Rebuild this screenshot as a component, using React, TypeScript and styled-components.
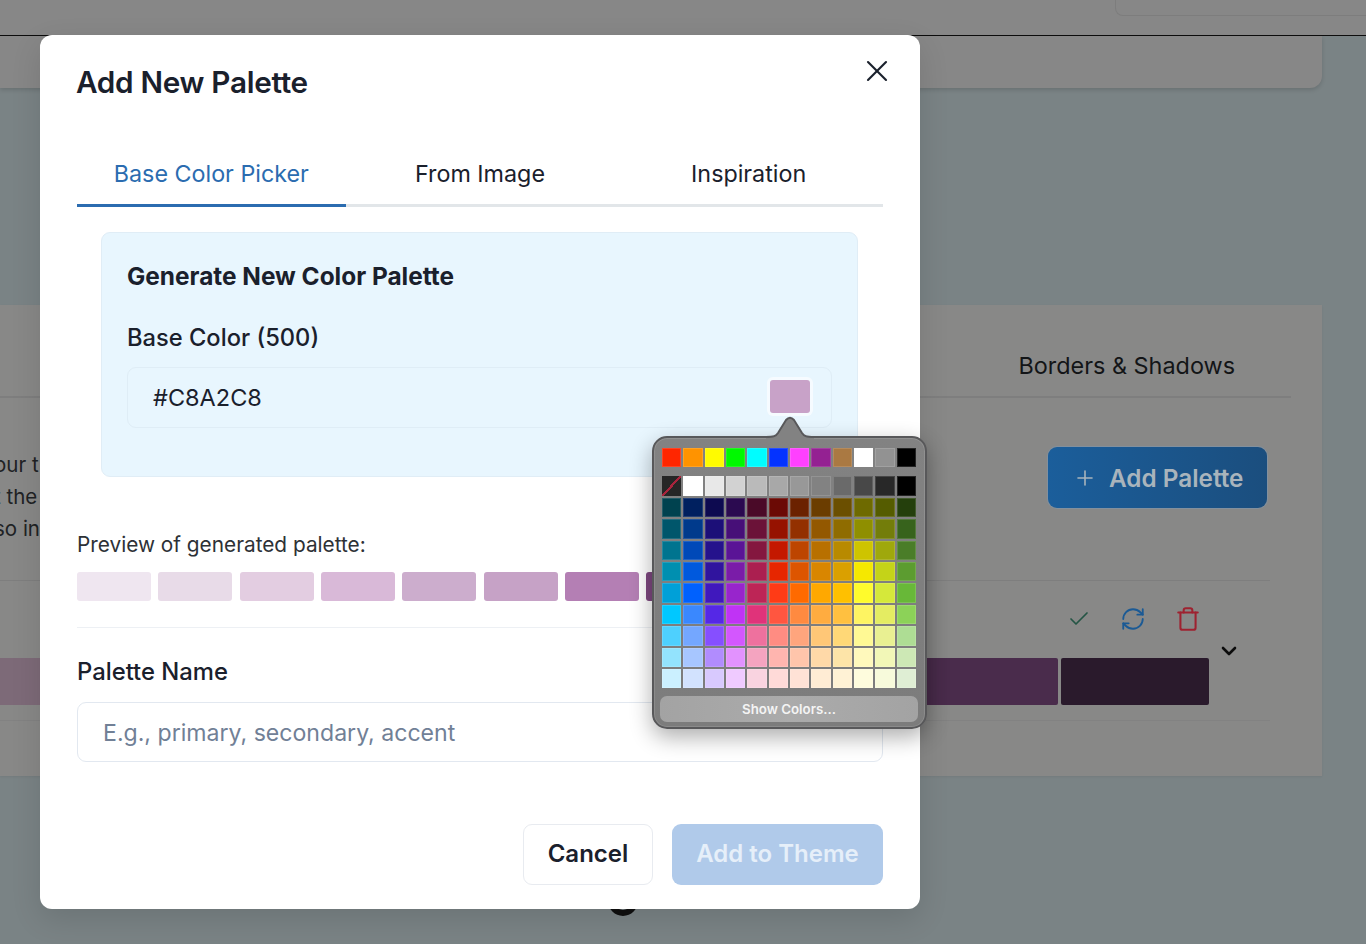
import React from "react";
import styled, { createGlobalStyle } from "styled-components";
import { Check, RefreshCw, Trash, ChevronDown, Plus, X } from "lucide-react";

const Global = createGlobalStyle`
  html, body { margin: 0; padding: 0; background: #7a8385; }
  body { font-family: Inter, "Liberation Sans", sans-serif; }
  * { box-sizing: border-box; }
`;

const Page = styled.div`
  position: relative;
  width: 1366px;
  height: 944px;
  overflow: hidden;
  background: #7a8385;
`;

/* ---------- dimmed page behind the dialog ---------- */
const Header = styled.header`
  display: flex;
  justify-content: flex-end;
  height: 36px;
  background: #878787;
  border-bottom: 1.5px solid #0d0d0d;
`;
const SearchStub = styled.div`
  width: 251px;
  height: 16px;
  border-left: 1px solid #7d7d7d;
  border-bottom: 1px solid #7d7d7d;
  border-bottom-left-radius: 8px;
`;
const TopCard = styled.div`
  width: 1322px;
  height: 52px;
  background: #878787;
  border-bottom-right-radius: 12px;
  box-shadow: 0 2px 4px rgba(0, 0, 0, 0.14);
`;
const MainCard = styled.section`
  width: 1322px;
  height: 471px;
  margin-top: 217px;
  background: #888887;
  box-shadow: 0 1px 2px rgba(0, 0, 0, 0.06);
`;
const PageTabs = styled.div`
  display: flex;
  justify-content: flex-end;
  align-items: flex-end;
  width: 1291px;
  height: 93px;
  padding: 0 56px 14px 0;
  border-bottom: 2px solid #7e7e7e;
  color: #131517;
  font-size: 23.4px;
  line-height: 32px;
`;
const Intro = styled.div`
  display: flex;
  justify-content: space-between;
  width: 1267px;
  height: 182px;
  padding-top: 49px;
`;
const IntroText = styled.p`
  margin: 0 0 0 -6px;
  padding-top: 2px;
  font-size: 20.5px;
  line-height: 32px;
  color: #202224;
  white-space: pre;
`;
const AddPalette = styled.div`
  display: flex;
  align-items: center;
  gap: 12px;
  width: 219px;
  height: 61px;
  padding-left: 25px;
  border-radius: 9px;
  background: linear-gradient(90deg, #1b5e9b, #1b4e7e);
  box-shadow: 0 0 0 1px rgba(120, 160, 200, 0.35);
  color: #a9b4bc;
  font-size: 24.3px;
  font-weight: 600;
`;
const RowRule = styled.div`
  width: 1270px;
  border-top: 1px solid #7e7e7e;
`;
const Actions = styled.div`
  display: flex;
  justify-content: flex-end;
  align-items: center;
  gap: 29px;
  width: 1201px;
  height: 76px;
  margin-bottom: 1px;
`;
const SwatchRow = styled.div`
  display: flex;
  align-items: flex-start;
  width: 1240px;
  height: 62px;
`;
const DarkSwatches = styled.div`
  display: flex;
  flex: none;
  gap: 3px;
  width: 1209px;
`;
const DarkSwatch = styled.div.attrs<{ $c: string }>((p) => ({ style: { background: p.$c } }))<{ $c: string }>`
  flex: 0 0 148px;
  height: 47px;
  border-radius: 2px;
  &:first-child {
    flex: 1 1 0;
    border-radius: 0;
  }
`;
const Chevron = styled.div`
  display: flex;
  margin: -19px 0 0 8px;
  color: #0c0c0c;
`;
const FadedRule = styled.div`
  width: 1270px;
  border-top: 1px solid #828282;
`;
const Spinner = styled.div`
  position: absolute;
  left: 608px;
  top: 886px;
  width: 30px;
  height: 30px;
  border-radius: 50%;
  border: 6px solid #101010;
`;

/* ---------- dialog ---------- */
const Overlay = styled.div`
  position: absolute;
  inset: 0;
  padding: 35px 0 0 40px;
`;
const Dialog = styled.div`
  position: relative;
  display: flex;
  flex-direction: column;
  width: 880px;
  height: 874px;
  padding: 28px 37px 0;
  background: #fff;
  border-radius: 12px;
  box-shadow: 0 10px 30px rgba(0, 0, 0, 0.12);
  color: #1a202c;
`;
const Title = styled.h2`
  margin: 0 0 0 -1px;
  height: 38px;
  font-size: 29.7px;
  line-height: 38px;
  font-weight: 600;
  letter-spacing: -0.3px;
`;
const Close = styled.div`
  position: absolute;
  top: 18px;
  right: 25px;
  display: flex;
  color: #1a202c;
`;
const Tabs = styled.div`
  display: grid;
  grid-template-columns: repeat(3, 1fr);
  width: 806px;
  margin-top: 43px;
  border-bottom: 3px solid #e2e6e9;
`;
const Tab = styled.div<{ $active?: boolean }>`
  height: 63px;
  margin-bottom: -3px;
  padding-top: 14px;
  text-align: center;
  font-size: 23.3px;
  line-height: 32px;
  color: ${(p) => (p.$active ? "#2b6cb0" : "#1a202c")};
  border-bottom: 3px solid ${(p) => (p.$active ? "#2b6cb0" : "transparent")};
`;
const GeneratorBox = styled.div`
  width: 757px;
  height: 245px;
  margin: 25px 0 0 24px;
  padding: 26px 25px 0;
  background: #e8f6fe;
  border: 1px solid #e0edf6;
  border-radius: 9px;
`;
const BoxTitle = styled.h3`
  margin: 0;
  font-size: 24.4px;
  line-height: 34px;
  font-weight: 700;
`;
const BoxLabel = styled.div`
  margin-top: 28px;
  font-size: 23.7px;
  line-height: 34px;
  font-weight: 500;
`;
const ColorField = styled.div`
  display: flex;
  align-items: center;
  justify-content: space-between;
  width: 705px;
  height: 61px;
  margin-top: 12px;
  padding: 0 21px 0 25px;
  border: 1px solid #dfedf6;
  border-radius: 9px;
  font-size: 23.5px;
`;
const ColorChip = styled.div`
  width: 40px;
  height: 33px;
  margin-top: -2px;
  border-radius: 3px;
  background: #c8a2c8;
  box-shadow: 0 0 0 3px rgba(255, 255, 255, 0.6);
`;
const PreviewLabel = styled.div`
  margin-top: 54px;
  font-size: 20.8px;
  line-height: 28px;
  color: #2d3136;
`;
const PreviewGrid = styled.div`
  display: grid;
  grid-template-columns: repeat(10, 1fr);
  column-gap: 7.4px;
  width: 806px;
  margin-top: 13px;
`;
const PreviewSwatch = styled.div.attrs<{ $c: string }>((p) => ({ style: { background: p.$c } }))<{ $c: string }>`
  height: 29px;
  border-radius: 3px;
`;
const Rule = styled.div`
  width: 806px;
  margin-top: 26px;
  border-top: 1px solid #edf0f4;
`;
const FieldLabel = styled.div`
  margin-top: 27px;
  font-size: 23.8px;
  line-height: 34px;
  font-weight: 500;
`;
const NameInput = styled.div`
  display: flex;
  align-items: center;
  width: 806px;
  height: 60px;
  margin-top: 13px;
  padding: 1px 0 0 25px;
  border: 1px solid #e2e8f0;
  border-radius: 9px;
  color: #718096;
  font-size: 23.1px;
`;
const Footer = styled.div`
  display: flex;
  justify-content: flex-end;
  gap: 19px;
  width: 806px;
  margin-top: 62px;
`;
const Button = styled.div`
  display: flex;
  align-items: center;
  justify-content: center;
  height: 61px;
  padding-bottom: 2px;
  border-radius: 9px;
  font-size: 24px;
  font-weight: 600;
`;
const CancelButton = styled(Button)`
  width: 130px;
  border: 1px solid #e8ebf0;
  color: #1a202c;
  background: #fff;
`;
const SubmitButton = styled(Button)`
  width: 211px;
  background: #b0caea;
  color: #e6eff9;
`;

/* ---------- macOS colour popover ---------- */
const Popover = styled.div`
  position: absolute;
  left: 652px;
  top: 436px;
  width: 275px;
  height: 293px;
  padding: 10px 8px 0;
  border-radius: 15px;
  background: linear-gradient(#828282, #7c7c7c);
  border: 2px solid #58585a;
  box-shadow: 0 8px 22px rgba(0, 0, 0, 0.32), inset 0 0 0 1px rgba(255, 255, 255, 0.12);
`;
const Pointer = styled.svg`
  position: absolute;
  left: 114px;
  top: -21px;
  display: block;
  overflow: visible;
`;
const ColorGrid = styled.div<{ $gapTop?: number }>`
  display: grid;
  grid-template-columns: repeat(12, 1fr);
  gap: 2px;
  width: 254px;
  margin-top: ${(p) => p.$gapTop ?? 0}px;
`;
const Cell = styled.div.attrs<{ $c: string }>((p) => ({ style: { background: p.$c } }))<{ $c: string }>`
  height: 19.4px;
  box-shadow: inset 0 0 0 1px rgba(255, 255, 255, 0.14);
`;
const NoColorCell = styled.div`
  height: 19.4px;
  background: linear-gradient(
    to top left,
    #262626 46%,
    #a8243c 46%,
    #a8243c 54%,
    #262626 54%
  );
`;
const ShowColors = styled.div`
  display: flex;
  align-items: center;
  justify-content: center;
  width: 258px;
  height: 26px;
  margin: 8px 0 0 -2px;
  border-radius: 7px;
  background: linear-gradient(90deg, #a3a3a3, #ababab 50%, #a3a3a3);
  color: #f4f4f4;
  font-size: 13.3px;
  font-weight: 600;
`;

const topRow = ["#ff2600","#ff9300","#fffb00","#00f900","#00fdff","#0433ff","#ff40ff","#942192","#aa7942","#ffffff","#929292","#000000"];
const grays = ["#ffffff","#e8e8e8","#d2d2d2","#bababa","#a8a8a8","#989898","#828282","#6a6a6a","#484848","#282828","#000000"];
const rows = [
  ["#00424f","#00205f","#0d0a50","#2b0a50","#4a0a28","#6b0a05","#6b2200","#6b3d00","#6b4f00","#6e6a00","#555c00","#243f0c"],
  ["#00566b","#003a8c","#1c0f78","#470f78","#6b1238","#961200","#933000","#935800","#8f6c00","#8f8f00","#737d0a","#37631c"],
  ["#00748f","#0049b8","#25128c","#5a1496","#84173f","#c41800","#bd4500","#b87000","#b88a00","#cec400","#9fa80c","#4a7d28"],
  ["#008fb0","#0059dd","#30149e","#7a1ca8","#ab1f50","#e62600","#dd5500","#d98600","#daa000","#f5e800","#c4d318","#5c9c30"],
  ["#00a0d8","#0061fe","#4018bd","#9825cc","#bd2556","#ff3b16","#ff6a00","#ffa800","#ffc000","#fffb2c","#d5e83a","#68b838"],
  ["#00c8ff","#3a88fe","#5528e6","#c033f5","#e0337a","#ff5640","#ff8a40","#ffac40","#ffc040","#fef462","#e4ec62","#8cd258"],
  ["#4ed0fe","#74a7ff","#864fff","#d357fe","#ee719e","#ff8c82","#ffa57d","#ffc777","#ffd877","#fff994","#e9f092","#aedd94"],
  ["#93e3fd","#a7c6ff","#b18cfe","#e292fe","#f4a4c0","#ffb5af","#ffc5ab","#ffd9a8","#fde4a8","#fff9bc","#f2f7b7","#cde8b5"],
  ["#cbf0ff","#d2e2fe","#d8c9fe","#efcaff","#f9d3e0","#ffdad8","#ffe2d6","#ffecd4","#fff2d5","#fefcdd","#f7fadb","#dfeed4"],
];
const preview = ["#efe6f0","#e8dbe8","#e3cde1","#d9b9d8","#ccadcd","#c6a2c6","#b47fb4","#7e4880","#5a2f5c","#3a1e3c"];
const bgSwatches = ["#7d6a78","#76607a","#705c72","#6b566c","#654f66","#5d4560","#4a2c4c","#2a1a2c"];

export default function App() {
  return (
    <Page>
      <Global />
      <Header><SearchStub /></Header>
      <TopCard />
      <MainCard>
        <PageTabs>Borders &amp; Shadows</PageTabs>
        <Intro>
          <IntroText>{"our t\nt the\nso in"}</IntroText>
          <AddPalette><Plus size={24} strokeWidth={1.6} />Add Palette</AddPalette>
        </Intro>
        <RowRule />
        <Actions>
          <Check size={24} strokeWidth={1.7} color="#245544" />
          <RefreshCw size={26} strokeWidth={1.7} color="#1b5a95" />
          <Trash size={26} strokeWidth={1.9} color="#9e2230" />
        </Actions>
        <SwatchRow>
          <DarkSwatches>
            {bgSwatches.map((c, i) => <DarkSwatch key={i} $c={c} />)}
          </DarkSwatches>
          <Chevron><ChevronDown size={24} strokeWidth={2.6} /></Chevron>
        </SwatchRow>
        <FadedRule />
      </MainCard>
      <Spinner />
      <Overlay>
        <Dialog>
          <Title>Add New Palette</Title>
          <Close><X size={36} strokeWidth={1.4} /></Close>
          <Tabs>
            <Tab $active>Base Color Picker</Tab>
            <Tab>From Image</Tab>
            <Tab>Inspiration</Tab>
          </Tabs>
          <GeneratorBox>
            <BoxTitle>Generate New Color Palette</BoxTitle>
            <BoxLabel>Base Color (500)</BoxLabel>
            <ColorField>#C8A2C8<ColorChip /></ColorField>
          </GeneratorBox>
          <PreviewLabel>Preview of generated palette:</PreviewLabel>
          <PreviewGrid>
            {preview.map((c) => <PreviewSwatch key={c} $c={c} />)}
          </PreviewGrid>
          <Rule />
          <FieldLabel>Palette Name</FieldLabel>
          <NameInput>E.g., primary, secondary, accent</NameInput>
          <Footer>
            <CancelButton>Cancel</CancelButton>
            <SubmitButton>Add to Theme</SubmitButton>
          </Footer>
        </Dialog>
      </Overlay>
      <Popover>
        <Pointer width="44" height="22" viewBox="0 0 44 22">
          <path d="M-2 20 C6 20 8 19 10 16 L18 3 Q22 -1.5 26 3 L34 16 C36 19 38 20 46 20 L46 22 L-2 22 Z" fill="#828282" />
          <path d="M-2 20 C6 20 8 19 10 16 L18 3 Q22 -1.5 26 3 L34 16 C36 19 38 20 46 20" fill="none" stroke="#58585a" strokeWidth="2" />
        </Pointer>
        <ColorGrid>
          {topRow.map((c, i) => <Cell key={i} $c={c} />)}
        </ColorGrid>
        <ColorGrid $gapTop={9}>
          <NoColorCell />
          {grays.map((c, i) => <Cell key={i} $c={c} />)}
          {rows.flat().map((c, i) => <Cell key={i} $c={c} />)}
        </ColorGrid>
        <ShowColors>Show Colors...</ShowColors>
      </Popover>
    </Page>
  );
}
